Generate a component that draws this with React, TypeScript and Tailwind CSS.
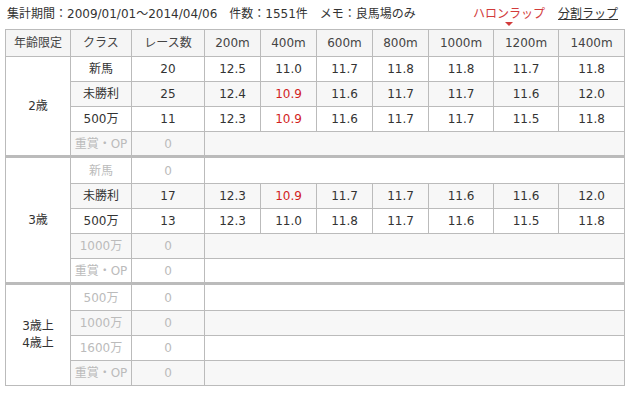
const font = { fontFamily: '"DejaVu Sans", "Noto Sans CJK JP", sans-serif' };

type Row = { cls: string; races: number; laps?: string[] };
type Group = { age: string[]; rows: Row[] };

const groups: Group[] = [
  {
    age: ["2歳"],
    rows: [
      { cls: "新馬", races: 20, laps: ["12.5", "11.0", "11.7", "11.8", "11.8", "11.7", "11.8"] },
      { cls: "未勝利", races: 25, laps: ["12.4", "10.9", "11.6", "11.7", "11.7", "11.6", "12.0"] },
      { cls: "500万", races: 11, laps: ["12.3", "10.9", "11.6", "11.7", "11.7", "11.5", "11.8"] },
      { cls: "重賞・OP", races: 0 },
    ],
  },
  {
    age: ["3歳"],
    rows: [
      { cls: "新馬", races: 0 },
      { cls: "未勝利", races: 17, laps: ["12.3", "10.9", "11.7", "11.7", "11.6", "11.6", "12.0"] },
      { cls: "500万", races: 13, laps: ["12.3", "11.0", "11.8", "11.7", "11.6", "11.5", "11.8"] },
      { cls: "1000万", races: 0 },
      { cls: "重賞・OP", races: 0 },
    ],
  },
  {
    age: ["3歳上", "4歳上"],
    rows: [
      { cls: "500万", races: 0 },
      { cls: "1000万", races: 0 },
      { cls: "1600万", races: 0 },
      { cls: "重賞・OP", races: 0 },
    ],
  },
];

const heads = ["年齢限定", "クラス", "レース数", "200m", "400m", "600m", "800m", "1000m", "1200m", "1400m"];
const widths = ["w-[65px]", "w-[61px]", "w-[73px]", "w-[56px]", "w-[56px]", "w-[56px]", "w-[56px]", "w-[65px]", "w-[65px]", "w-[66px]"];

export default function App() {
  return (
    <div className="w-[633px] h-[393px] bg-white text-[#333]" style={font}>
      <div className="flex items-start justify-between h-[29px] pl-[7px] pr-[15px] pt-[5px] text-[12px]">
        <p className="whitespace-pre">集計期間：2009/01/01～2014/04/06　件数：1551件　メモ：良馬場のみ</p>
        <div className="flex gap-[13px]">
          <div className="relative text-[#d23b3b]">
            ハロンラップ
            <span className="absolute left-1/2 -translate-x-1/2 top-[17px] w-0 h-0 border-l-[4px] border-r-[4px] border-t-[4px] border-l-transparent border-r-transparent border-t-[#d23b3b]" />
          </div>
          <span className="underline">分割ラップ</span>
        </div>
      </div>
      <table className="ml-[5px] w-[619px] border-collapse table-fixed text-[12px] text-center">
        <thead>
          <tr className="h-[27px] bg-[#f5f5f5]">
            {heads.map((h, i) => (
              <th key={h} className={`${widths[i]} border border-[#bbb] font-normal text-[#444]`}>{h}</th>
            ))}
          </tr>
        </thead>
        <tbody>
          {groups.map((g, gi) =>
            g.rows.map((r, ri) => {
              const first = gi > 0 && ri === 0;
              const top = first ? "border-t-[3px] border-t-double" : "";
              const bg = ri % 2 === 1 ? "bg-[#f7f7f7]" : "bg-white";
              const muted = r.races === 0 ? "text-[#bbb]" : "";
              return (
                <tr key={`${gi}-${ri}`} className={`${first ? "h-[27px]" : "h-[25px]"} ${bg}`}>
                  {ri === 0 && (
                    <td rowSpan={g.rows.length} className={`border border-[#bbb] bg-white leading-[17px] ${top}`}>
                      {g.age.map((a) => (
                        <div key={a}>{a}</div>
                      ))}
                    </td>
                  )}
                  <td className={`border border-[#bbb] ${muted} ${top}`}>{r.cls}</td>
                  <td className={`border border-[#bbb] ${muted} ${top}`}>{r.races}</td>
                  {r.laps ? (
                    r.laps.map((v, li) => (
                      <td key={li} className={`border border-[#bbb] ${li === 1 && v === "10.9" ? "text-[#d21e1e]" : ""} ${top}`}>
                        {v}
                      </td>
                    ))
                  ) : (
                    <td colSpan={7} className={`border border-[#bbb] ${top}`} />
                  )}
                </tr>
              );
            })
          )}
        </tbody>
      </table>
    </div>
  );
}
